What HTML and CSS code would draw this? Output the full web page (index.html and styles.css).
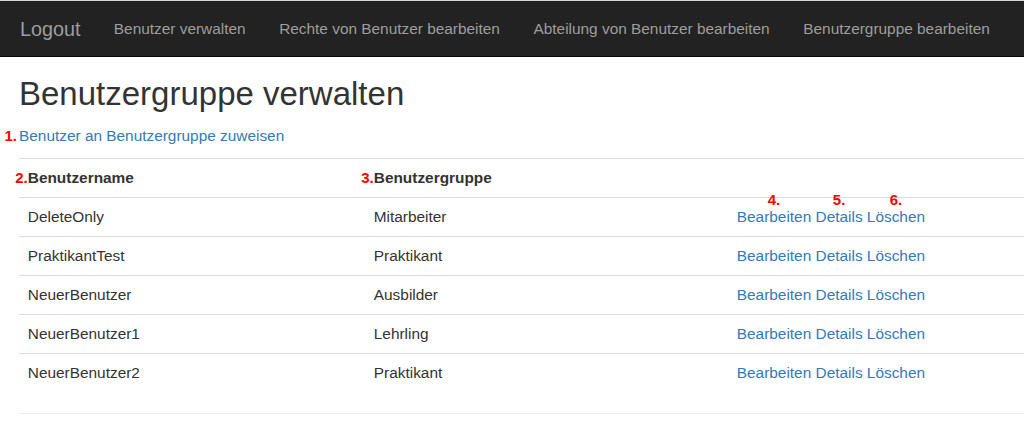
FILE: index.html
```html
<!DOCTYPE html>
<html lang="de">
<head>
<meta charset="utf-8">
<title>Benutzergruppe verwalten</title>
<link rel="stylesheet" href="styles.css">
</head>
<body>
<nav class="navbar">
  <a class="brand" href="#">Logout</a>
  <ul class="nav">
    <li><a href="#">Benutzer verwalten</a></li>
    <li><a href="#">Rechte von Benutzer bearbeiten</a></li>
    <li><a href="#">Abteilung von Benutzer bearbeiten</a></li>
    <li><a href="#">Benutzergruppe bearbeiten</a></li>
  </ul>
</nav>
<main class="content">
  <h1 class="title">Benutzergruppe verwalten</h1>
  <p class="create"><a class="anchor" href="#"><span class="mark mark-left">1.</span>Benutzer an Benutzergruppe zuweisen</a></p>
  <table class="table">
    <colgroup><col class="c1"><col class="c2"><col class="c3"></colgroup>
    <thead>
      <tr>
        <th><span class="anchor"><span class="mark mark-left tight">2.</span>Benutzername</span></th>
        <th><span class="anchor"><span class="mark mark-left tight">3.</span>Benutzergruppe</span></th>
        <th></th>
      </tr>
    </thead>
    <tbody>
      <tr>
        <td>DeleteOnly</td>
        <td>Mitarbeiter</td>
        <td><a class="anchor" href="#"><span class="mark mark-top">4.</span>Bearbeiten</a> <a class="anchor" href="#"><span class="mark mark-top">5.</span>Details</a> <a class="anchor" href="#"><span class="mark mark-top">6.</span>Löschen</a></td>
      </tr>
      <tr>
        <td>PraktikantTest</td>
        <td>Praktikant</td>
        <td><a href="#">Bearbeiten</a> <a href="#">Details</a> <a href="#">Löschen</a></td>
      </tr>
      <tr>
        <td>NeuerBenutzer</td>
        <td>Ausbilder</td>
        <td><a href="#">Bearbeiten</a> <a href="#">Details</a> <a href="#">Löschen</a></td>
      </tr>
      <tr>
        <td>NeuerBenutzer1</td>
        <td>Lehrling</td>
        <td><a href="#">Bearbeiten</a> <a href="#">Details</a> <a href="#">Löschen</a></td>
      </tr>
      <tr>
        <td>NeuerBenutzer2</td>
        <td>Praktikant</td>
        <td><a href="#">Bearbeiten</a> <a href="#">Details</a> <a href="#">Löschen</a></td>
      </tr>
    </tbody>
  </table>
  <hr class="rule">
</main>
</body>
</html>
```

FILE: styles.css
```css
html, body {
  margin: 0;
  padding: 0;
  overflow: hidden;
}
body {
  font-family: "Liberation Sans", Arial, Helvetica, sans-serif;
  font-size: 15.4px;
  line-height: 22px;
  color: #333;
  background: #fff;
  border-top: 1px solid #d4d4d4;
}
a {
  color: #337ab7;
  text-decoration: none;
}
.navbar {
  display: flex;
  align-items: stretch;
  height: 55px;
  background: #222;
  border-bottom: 1px solid #080808;
}
.brand {
  display: block;
  padding: 16.5px 16.5px 16.5px 20px;
  font-size: 19.8px;
  line-height: 22px;
  color: #9d9d9d;
}
.nav {
  display: flex;
  list-style: none;
  margin: 0;
  padding: 0;
}
.nav a {
  display: block;
  padding: 16.5px 16.8px;
  line-height: 22px;
  color: #9d9d9d;
}
.content {
  padding-left: 19px;
}
.title {
  margin: 19.4px 0 12px;
  font-size: 33px;
  line-height: 36.3px;
  font-weight: 500;
}
.create {
  margin: 0 0 11px;
}
.table {
  width: 1020px;
  border-collapse: collapse;
  border-spacing: 0;
  margin-bottom: 21px;
}
.c1 { width: 346px; }
.c2 { width: 363px; }
.table th,
.table td {
  text-align: left;
  padding: 8px 8.8px;
  line-height: 22px;
  border-top: 1px solid #ddd;
  vertical-align: top;
}
.table th {
  font-weight: bold;
}
.anchor {
  position: relative;
}
.mark {
  position: absolute;
  font-size: 15px;
  font-weight: bold;
  line-height: 15px;
  color: #f00;
  white-space: nowrap;
}
.mark-left {
  right: 100%;
  top: 1px;
  margin-right: 2px;
}
.mark-left.tight {
  margin-right: 0;
}
.mark-top {
  left: 50%;
  bottom: 100%;
  transform: translateX(-50%);
  margin-bottom: 1px;
}
.rule {
  margin: 0;
  border: 0;
  border-top: 1px solid #eee;
  width: 1020px;
}
```
